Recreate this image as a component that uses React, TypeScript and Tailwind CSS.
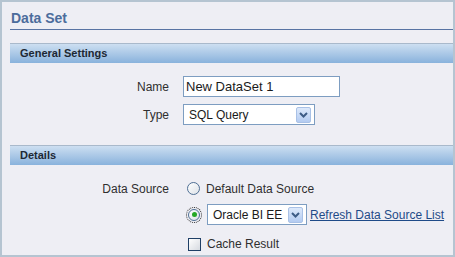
import React from "react";

const Chevron = () => (
  <div className="flex h-[16px] w-[15px] items-center justify-center rounded-[2px] border border-[#a9c1e6] bg-gradient-to-b from-[#dde9fb] to-[#b3cbf1]">
    <svg width="9" height="6" viewBox="0 0 9 6">
      <path d="M1 1 L4.5 4.5 L8 1" stroke="#3d5c86" strokeWidth="2" fill="none" />
    </svg>
  </div>
);

const Header = ({ title }: { title: string }) => (
  <div className="flex h-[20px] items-center border-t border-[#a9b9cb] bg-gradient-to-b from-[#cddff1] to-[#89b2dc] pl-[10px] text-[11px] font-bold text-[#1d2834] [font-family:'Liberation_Sans',Arial,sans-serif]">
    {title}
  </div>
);

export default function App() {
  const lbl = "w-[159px] shrink-0 pr-0 text-right text-[12px] text-[#2f2f2f]";
  return (
    <div className="h-[257px] w-[455px] overflow-hidden border-2 border-[#b5c4d1] bg-[#eeeef4] pl-[8px] [font-family:'Liberation_Sans',Arial,sans-serif]">
      <div className="h-[28px] border-b border-[#5873a3] pl-[1px] pt-[8px] text-[14px] font-bold leading-[16px] text-[#4c6c9c]">
        Data Set
      </div>
      <div className="mt-[13px]">
        <Header title="General Settings" />
      </div>
      <div className="mt-[13px] flex items-center">
        <div className={lbl}>Name</div>
        <div className="ml-[14px] flex h-[21px] w-[157px] items-center border border-[#7d9dc1] bg-white pl-[2px] text-[13px] text-[#1a1a1a]">
          New DataSet 1
        </div>
      </div>
      <div className="mt-[7px] flex items-center">
        <div className={lbl}>Type</div>
        <div className="ml-[14px] flex h-[21px] w-[132px] items-center justify-between border border-[#7d9dc1] bg-white pl-[5px] pr-[3px] text-[12px] text-[#1a1a1a]">
          <span>SQL Query</span>
          <Chevron />
        </div>
      </div>
      <div className="mt-[20px]">
        <Header title="Details" />
      </div>
      <div className="mt-[17px] flex h-[13px] items-center">
        <div className={lbl}>Data Source</div>
        <div className="ml-[18px] h-[13px] w-[13px] rounded-full border border-[#4f6f94] bg-gradient-to-br from-[#ffffff] to-[#dde2e8]" />
        <span className="ml-[6px] text-[12px] text-[#2f2f2f]">Default Data Source</span>
      </div>
      <div className="mt-[9px] flex items-center">
        <div className="w-[159px] shrink-0" />
        <div className="ml-[18px] flex h-[14px] w-[14px] items-center justify-center rounded-full outline-1 outline-dotted outline-[#222]">
          <div className="flex h-[12px] w-[12px] items-center justify-center rounded-full border border-[#4f6f94] bg-gradient-to-br from-[#ffffff] to-[#dde2e8]">
            <div className="h-[5px] w-[5px] rounded-full bg-[#25a825]" />
          </div>
        </div>
        <div className="ml-[6px] flex h-[21px] w-[100px] items-center justify-between border border-[#7d9dc1] bg-white pl-[5px] pr-[3px] text-[12px] text-[#1a1a1a]">
          <span>Oracle BI EE</span>
          <Chevron />
        </div>
        <span className="ml-[3px] text-[12px] text-[#1f4b88] underline">Refresh Data Source List</span>
      </div>
      <div className="mt-[10px] flex items-center">
        <div className="w-[159px] shrink-0" />
        <div className="ml-[19px] h-[13px] w-[13px] border border-[#1f3f66] bg-gradient-to-br from-[#ffffff] to-[#d6dae0]" />
        <span className="ml-[6px] text-[12px] text-[#2f2f2f]">Cache Result</span>
      </div>
    </div>
  );
}
